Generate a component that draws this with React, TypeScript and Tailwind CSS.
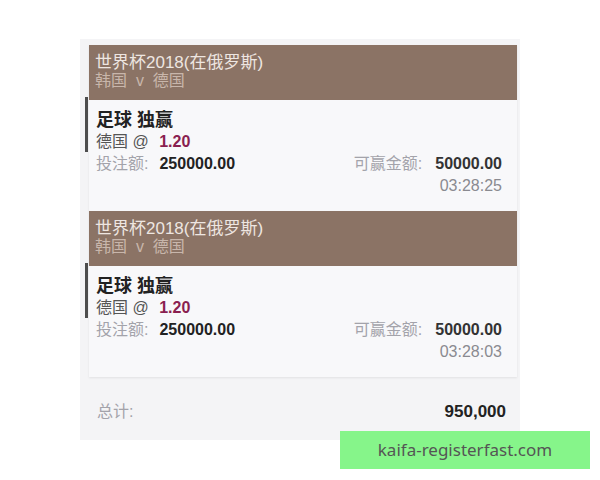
import React from "react";

const font = { fontFamily: '"Liberation Sans", "Noto Sans CJK SC", sans-serif' };

function Card({ time }: { time: string }) {
  return (
    <div className="relative h-[166px] bg-[#f8f8fa] shadow-[0_1px_2px_rgba(0,0,0,0.08)]">
      <div className="h-[55px] bg-[#8b7365] pl-[6px] pt-[9px]">
        <div className="h-[18px] text-[17px] leading-[18px] text-[#eee6e1]">世界杯2018(在俄罗斯)</div>
        <div className="h-[18px] text-[16px] leading-[18px] text-[#c8b6ab] whitespace-pre">韩国  v  德国</div>
      </div>
      <div className="absolute left-[-4px] top-[52px] h-[55px] w-[3px] bg-[#4d4d4d]" />
      <div className="pl-[7px] pr-[15px] pt-[9px]">
        <div className="h-[22px] text-[18px] font-bold leading-[22px] text-[#222]">足球 独赢</div>
        <div className="h-[22px] text-[16px] leading-[22px] text-[#555]">
          德国 @ <span className="ml-[6px] font-bold text-[#8a1f50]">1.20</span>
        </div>
        <div className="flex h-[22px] justify-between text-[16px] leading-[22px]">
          <div>
            <span className="text-[#a3a3aa]">投注额:</span>
            <span className="ml-[11px] font-bold text-[#222]">250000.00</span>
          </div>
          <div>
            <span className="text-[#a3a3aa]">可赢金额:</span>
            <span className="ml-[13px] font-bold text-[#333]">50000.00</span>
          </div>
        </div>
        <div className="h-[22px] text-right text-[16px] leading-[22px] text-[#8a8a90]">{time}</div>
      </div>
    </div>
  );
}

export default function App() {
  return (
    <div className="relative h-[480px] w-[600px] overflow-hidden bg-white" style={font}>
      <div className="ml-[80px] mt-[39px] h-[401px] w-[440px] bg-[#f4f4f6] pt-[6px]">
        <div className="pl-[9px] pr-[3px]">
          <Card time="03:28:25" />
          <Card time="03:28:03" />
        </div>
        <div className="mt-[24px] flex h-[22px] items-center justify-between pl-[17px] pr-[14px] leading-[22px]">
          <span className="text-[16px] text-[#a3a3aa]">总计:</span>
          <span className="text-[17px] font-bold text-[#222]">950,000</span>
        </div>
      </div>
      <div
        className="absolute left-[340px] top-[431px] flex h-[38px] w-[250px] items-center justify-center bg-[#86f58a] text-[17px] text-[#555]"
        style={{ fontFamily: '"Noto Sans", sans-serif' }}
      >
        kaifa-registerfast.com
      </div>
    </div>
  );
}
